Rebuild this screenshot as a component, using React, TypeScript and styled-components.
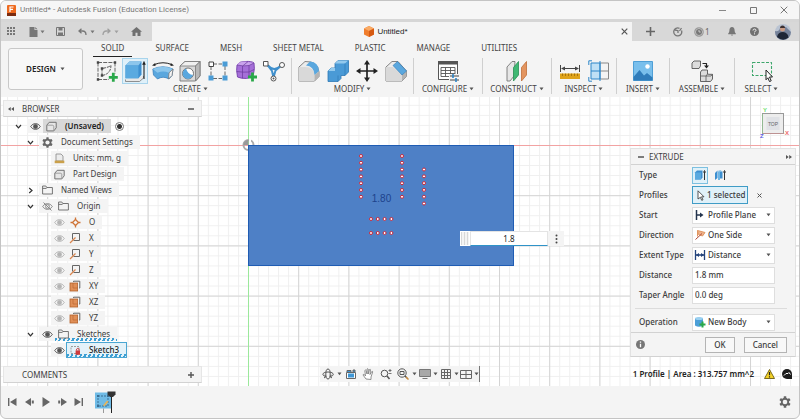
import React from 'react';
import styled, { createGlobalStyle, css } from 'styled-components';

const INK = '#3c3c3c';
const PANEL = '#f4f4f4';
const LINE = '#d2d2d2';

const GlobalStyle = createGlobalStyle`
  *, *::before, *::after { box-sizing: border-box; }
  body { margin: 0; background: #fff; }
  body, button, input, select { font-family: "Noto Sans", "Open Sans", sans-serif; font-size: 8px; line-height: 12px; color: ${INK}; }
  button { border: 0; padding: 0; background: none; cursor: pointer; }
  svg { display: block; flex: none; }
`;

/* ---------- shell ---------- */

const Window = styled.div`
  display: flex;
  flex-direction: column;
  min-height: 100vh;
  background: ${PANEL};
  border: 1px solid #c4c4c4;
  border-radius: 6px;
  overflow: hidden;
`;

const TitleBar = styled.header`
  display: flex;
  align-items: center;
  height: 18px;
  padding: 0 9px 0 6px;
  background: #f6f6f6;
`;

const Title = styled.h1`
  flex: 1;
  margin: 0 0 0 4px;
  font: 400 8px/12px Roboto, sans-serif;
  color: #777;
`;

const WindowButtons = styled.div`
  display: flex;
  gap: 19px;
`;

const IconButton = styled.button<{ $w?: number; $h?: number }>`
  display: flex;
  align-items: center;
  justify-content: center;
  flex: none;
  width: ${p => p.$w ?? 12}px;
  height: ${p => p.$h ?? 14}px;
`;

const DocumentBar = styled.div`
  display: flex;
  height: 22px;
  border-top: 3px solid #d6d6d6;
  background: #d8d8d8;
`;

const QuickAccess = styled.div`
  display: flex;
  align-items: center;
  width: 151px;
  padding-left: 4px;
`;

const Spacer = styled.span<{ $w: number }>`
  flex: none;
  width: ${p => p.$w}px;
`;

const DocumentTab = styled.div`
  flex: 1;
  display: flex;
  align-items: center;
  padding: 0 2px 0 2px;
  background: ${PANEL};
`;

const TabTitle = styled.div`
  flex: 1;
  display: flex;
  align-items: center;
  justify-content: center;
  gap: 3px;
  font: 400 8px/12px "Liberation Sans", sans-serif;
  color: #222;
`;

const AccountArea = styled.div`
  display: flex;
  align-items: center;
  width: 167px;
  padding: 0 8px 0 11px;
`;

const JobCount = styled.span`
  margin-left: 1px;
  color: #666;
`;

/* ---------- ribbon ---------- */

const Ribbon = styled.div`
  display: flex;
  height: 56px;
`;

const WorkspaceButton = styled.button`
  display: flex;
  align-items: center;
  justify-content: center;
  gap: 4px;
  flex: none;
  width: 75px;
  height: 42px;
  margin: 7px 7px 0;
  border: 1px solid #c8c8c8;
  border-radius: 3px;
  background: #f8f8f8;
  font-weight: 600;
  color: #222;
`;

const RibbonMain = styled.div`
  flex: 1;
`;

const RibbonTabs = styled.nav`
  display: flex;
  gap: 31px;
  height: 16px;
  padding-left: 11px;
`;

const RibbonTab = styled.button<{ $active?: boolean }>`
  position: relative;
  height: 16px;
  padding-bottom: 2px;
  color: #444;
  ${p => p.$active && css`
    &::after {
      content: '';
      position: absolute;
      left: -8px;
      right: -8px;
      bottom: 0;
      height: 1px;
      background: #222;
    }
  `}
`;

const Groups = styled.div`
  display: flex;
`;

const Group = styled.div<{ $w: number }>`
  flex: none;
  display: flex;
  flex-direction: column;
  align-items: center;
  width: ${p => p.$w}px;
  height: 36px;
  margin-top: 1px;
  padding: 0 4px;
  & + & { border-left: 1px solid #cfcfcf; }
`;

const GroupIcons = styled.div<{ $spread?: boolean }>`
  display: flex;
  align-items: center;
  justify-content: ${p => (p.$spread ? 'space-between' : 'center')};
  gap: ${p => (p.$spread ? 0 : 3)}px;
  width: 100%;
  height: 25px;
`;

const Tool = styled.button<{ $on?: boolean }>`
  display: flex;
  align-items: center;
  justify-content: center;
  flex: none;
  width: 26px;
  height: 26px;
  border: 1px solid ${p => (p.$on ? '#a8d4ec' : 'transparent')};
  background: ${p => (p.$on ? '#dff0f9' : 'transparent')};
`;

const GroupLabel = styled.button`
  display: flex;
  align-items: center;
  gap: 2px;
  line-height: 12px;
  white-space: nowrap;
  color: #444;
`;

/* ---------- canvas ---------- */

const Canvas = styled.main`
  position: relative;
  flex: 1;
  display: flex;
  justify-content: space-between;
  min-height: 289px;
  background: #fff;
  overflow: hidden;
`;

const Scene = styled.svg`
  position: absolute;
  inset: 0;
`;

const LeftColumn = styled.div`
  position: relative;
  display: flex;
  flex-direction: column;
  width: 201px;
  padding: 3px 0 3px 2px;
`;

const PaneHeader = styled.div`
  display: flex;
  align-items: center;
  height: 17px;
  padding: 0 4px;
  background: ${PANEL};
  border: 1px solid #e6e6e6;
  border-bottom-color: ${LINE};
`;

const PaneTitle = styled.h2<{ $inset?: boolean }>`
  flex: 1;
  margin: 0;
  padding-left: ${p => (p.$inset ? 14 : 2)}px;
  font-size: 8px;
  font-weight: 400;
  line-height: 12px;
`;

const Tree = styled.ul`
  flex: 1;
  margin: 1px 0 0;
  padding: 0;
  list-style: none;
`;

const TreeRow = styled.li<{ $level: number; $leaf?: boolean }>`
  display: flex;
  align-items: center;
  height: 16px;
  padding-left: ${p => 7 + p.$level * 12 + (p.$leaf ? 17 : 0)}px;
`;

const Cell = styled.span`
  display: flex;
  align-items: center;
  justify-content: center;
  flex: none;
  width: 16px;
  height: 14px;
`;

const Expander = styled.button`
  display: flex;
  align-items: center;
  justify-content: center;
  width: 16px;
  height: 14px;
  margin-right: 1px;
`;

const RowBody = styled.div<{ $tone?: 'root' | 'picked' | 'hatched' }>`
  display: flex;
  align-items: center;
  height: 14px;
  padding-right: 7px;
  background: ${PANEL};
  ${p => p.$tone === 'root' && css`background: #d8d8d8; font-weight: 600; color: #222;`}
  ${p => (p.$tone === 'hatched' || p.$tone === 'picked') && css`
    background: repeating-linear-gradient(115deg, #3c9fd4 0 2px, transparent 2px 4px) left bottom / 100% 3px no-repeat, ${PANEL};
  `}
  ${p => p.$tone === 'picked' && css`
    background-color: #e4f2f9;
    outline: 1px solid #4aa6d2;
    font-weight: 500;
    color: #222;
  `}
`;

const RowText = styled.span`
  padding-left: 6px;
  white-space: nowrap;
`;

const EyeBox = styled.button`
  display: flex;
  align-items: center;
  justify-content: center;
  width: 16px;
  height: 14px;
  background: ${PANEL};
`;

const ActiveRadio = styled.input`
  appearance: none;
  width: 9px;
  height: 9px;
  margin: 0 0 0 4px;
  border: 1px solid #777;
  border-radius: 50%;
  background: radial-gradient(circle, #333 0 2px, #fff 3px);
`;

const NavBar = styled.div`
  position: absolute;
  left: 40%;
  bottom: 4px;
  display: flex;
  align-items: center;
  height: 16px;
  background: ${PANEL};
  border-right: 1px solid #777;
`;

const ValueBox = styled.div`
  position: absolute;
  left: 459px;
  top: 134px;
  display: flex;
  height: 15px;
`;

const Grip = styled.span`
  width: 10px;
  border: 1px solid #fff;
  background: repeating-linear-gradient(90deg, #d8d8d8 0 1px, #f4f4f4 1px 3px);
`;

const ValueInput = styled.input`
  width: 78px;
  padding: 0;
  border: 1px solid #e4e4e4;
  border-bottom: 1px solid #2f93c8;
  background: #fff;
  text-align: center;
  color: #222;
  outline: 0;
`;

const ValueMenu = styled(IconButton)`
  height: 15px;
  background: ${PANEL};
`;

const RightColumn = styled.div`
  position: relative;
  display: flex;
  flex-direction: column;
  width: 169px;
  padding-right: 3px;
`;

const CubeArea = styled.div`
  display: flex;
  justify-content: flex-end;
  height: 51px;
  padding: 9px 6px 0 0;
`;

const Dialog = styled.form`
  background: ${PANEL};
  border: 1px solid #e2e2e2;
  border-bottom-color: ${LINE};
`;

const DialogHeader = styled.div`
  display: flex;
  align-items: center;
  height: 16px;
  padding: 0 3px 0 7px;
  border-bottom: 1px solid ${LINE};
`;

const DialogTitle = styled.h2`
  flex: 1;
  margin: 0 0 0 5px;
  font-size: 8px;
  font-weight: 400;
  line-height: 12px;
`;

const Field = styled.div`
  display: flex;
  align-items: center;
  height: 20px;
  padding-left: 8px;
`;

const fieldLabel = css`
  width: 53px;
  flex: none;
  font-weight: 500;
  white-space: nowrap;
`;
const FieldLabel = styled.label`${fieldLabel}`;
const FieldName = styled.span`${fieldLabel}`;

const SelectShell = styled.div`
  display: flex;
  align-items: center;
  width: 83px;
  height: 17px;
  padding-left: 1px;
  border: 1px solid #dedede;
  background: #fff;
`;

const Select = styled.select`
  flex: 1;
  min-width: 0;
  height: 15px;
  margin-left: 2px;
  padding: 0;
  border: 0;
  appearance: none;
  font-weight: 500;
  background: none;
  outline: 0;
`;

const SelectCaret = styled.span`
  flex: none;
  width: 8px;
  pointer-events: none;
`;

const TextInput = styled.input`
  width: 83px;
  height: 17px;
  padding: 0 2px 1px;
  border: 1px solid #dedede;
  background: #fff;
  font-weight: 500;
`;

const TypeButton = styled.button<{ $on?: boolean }>`
  display: flex;
  align-items: center;
  justify-content: center;
  width: 16px;
  height: 17px;
  margin-right: 4px;
  border: 1px solid ${p => (p.$on ? '#7cc0e0' : 'transparent')};
  background: ${p => (p.$on ? '#e0f1f9' : 'transparent')};
`;

const PickButton = styled.button`
  display: flex;
  align-items: center;
  gap: 2px;
  width: 56px;
  height: 18px;
  margin-right: 6px;
  padding-left: 4px;
  border: 1px solid #3f9cc6;
  background: #e0f1f9;
  font-weight: 500;
  white-space: nowrap;
`;

const Rule = styled.hr`
  height: 1px;
  margin: 3px 8px 3px 4px;
  border: 0;
  background: #dcdcdc;
`;

const DialogFooter = styled.div`
  display: flex;
  align-items: center;
  gap: 9px;
  height: 24px;
  padding: 0 8px 0 5px;
  border-top: 1px solid ${LINE};
`;

const DialogButton = styled.button`
  height: 16px;
  padding: 0 8px;
  border: 1px solid #b4b4b4;
  background: #f8f8f8;
  font-weight: 500;
`;

const Grow = styled.span`
  flex: 1;
`;

const StatusLine = styled.div`
  display: flex;
  align-items: center;
  justify-content: flex-end;
  gap: 7px;
  margin-top: auto;
  height: 24px;
  padding-right: 4px;
  font-weight: 600;
  color: #222;
  white-space: nowrap;
`;

const StatusIcons = styled.span`
  display: flex;
  align-items: center;
  gap: 7px;
  padding-left: 3px;
`;

const Timeline = styled.footer`
  display: flex;
  align-items: center;
  height: 32px;
  padding: 0 7px 0 3px;
`;

const Marker = styled.div`
  display: flex;
  padding-left: 7px;
`;

/* ---------- icons ---------- */

const Caret = ({ color = '#555' }: { color?: string }) => (
  <svg width="5" height="4" viewBox="0 0 5 4"><path d="M.5.5h4L2.5 3.3z" fill={color} /></svg>
);

const Chevron = ({ open }: { open: boolean }) => (
  <svg width="7" height="7" viewBox="0 0 7 7" fill="none" stroke="#333" strokeWidth="1.2">
    <path d={open ? 'M1 2l2.5 2.8L6 2' : 'M2.2 1L5 3.5 2.2 6'} />
  </svg>
);

const Gear = ({ size }: { size: number }) => (
  <svg width={size} height={size} viewBox="0 0 12 12">
    <g fill="#666">
      {[0, 60, 120].map(a => <rect key={a} x="4.7" y="0.3" width="2.6" height="11.4" rx=".5" transform={`rotate(${a} 6 6)`} />)}
      <circle cx="6" cy="6" r="4.2" />
    </g>
    <circle cx="6" cy="6" r="2.3" fill={PANEL} />
  </svg>
);

const Eye = ({ tone, off }: { tone: string; off?: boolean }) => (
  <svg width="11" height="9" viewBox="0 0 11 9" fill="none" stroke={tone}>
    <path d="M.7 4.5C3 .7 8 .7 10.3 4.5 8 8.3 3 8.3.7 4.5z" />
    <circle cx="5.5" cy="4.5" r="1.9" fill={off ? 'none' : tone} />
    {off && <path d="M1.5.5l8 8" />}
  </svg>
);

const Folder = () => (
  <svg width="11" height="10" viewBox="0 0 11 10" fill="none" stroke="#666" strokeWidth=".9">
    <path d="M.6 9V1h3.2l1 1.5h5.6V9zM.6 3.4h3.7l.8-.9" />
  </svg>
);

const BodyIcon = () => (
  <svg width="11" height="11" viewBox="0 0 11 11" fill="#e6e6e6" stroke="#666" strokeWidth=".9">
    <path d="M.8 4.2l2.4-2.9h7v5.5L7.800 9.900H.8z" />
    <path d="M.8 4.200h5.500q1.500 0 1.500 1.500v4" fill="none" stroke="#999" />
  </svg>
);

const UnitsIcon = () => (
  <svg width="11" height="11" viewBox="0 0 11 11">
    <path d="M2 1h5l2 2v5H2z" fill="#ececec" stroke="#888" strokeWidth=".8" />
    <rect x=".7" y="7.6" width="9.6" height="2.6" fill="#caa04a" />
  </svg>
);

const PointIcon = () => (
  <svg width="11" height="11" viewBox="0 0 11 11" fill="none" stroke="#cf7437" strokeWidth="1.3">
    <path d="M5.5 2.5l3 3-3 3-3-3z" /><path d="M5.5.5v2M5.5 8.5v2M.5 5.5h2M8.5 5.5h2" />
  </svg>
);

const AxisIcon = () => (
  <svg width="12" height="12" viewBox="0 0 12 12" fill="none">
    <path d="M3.5 7.5v-6h7v7h-6" stroke="#666" /><path d="M1 11l5.5-5.5" stroke="#d98650" strokeWidth="1.3" />
  </svg>
);

const PlaneIcon = () => (
  <svg width="12" height="12" viewBox="0 0 12 12">
    <path d="M4.5 2V1.2h6.3V8H10" fill="none" stroke="#666" />
    <rect x="1" y="3" width="7.6" height="8" fill="#e08f58" stroke="#b5622c" strokeWidth=".8" />
    <path d="M4 3v5h4.6" fill="none" stroke="#b5622c" strokeWidth=".6" />
  </svg>
);

const LockedSketch = () => (
  <svg width="12" height="11" viewBox="0 0 12 11">
    <path d="M2 1.5h8v7H2z" fill="none" stroke="#888" strokeWidth=".8" strokeDasharray="2 1" />
    <rect x="6.6" y="5.4" width="4.4" height="4.4" fill="#d03a3a" /><path d="M7.5 5.4V4.2q1.3-1.6 2.6 0v1.2" fill="none" stroke="#d03a3a" />
  </svg>
);

const ToolSvg = ({ children }: { children: React.ReactNode }) => (
  <svg width="22" height="22" viewBox="0 0 22 22" fill="none" strokeLinejoin="round">{children}</svg>
);

const Plus = ({ x, y }: { x: number; y: number }) => (
  <path d={`M${x} ${y - 4.5}v9M${x - 4.5} ${y}h9`} stroke="#2aa84a" strokeWidth="2.8" />
);

const icons: Record<string, React.ReactNode> = {
  sketch: <>
    <path d="M2 2.5h17M2 2.5v17M19 2.5v11M2 19.5h11" stroke="#555" strokeWidth=".9" strokeDasharray="4 1.2" />
    <path d="M6 15.5V8.5C9 8 13 7 15 5.5c0 4-2 9-9 10z" stroke="#555" strokeDasharray="3 1" />
    <path d="M.8 1.3h2.4v2.4H.8zM17.8 1.3h2.4v2.4h-2.4zM.8 18.3h2.4v2.4H.8zM4.8 7.3h2.4v2.4H4.8zM4.8 14.3h2.4v2.4H4.8z" fill="#444" />
    <Plus x={17.3} y={17.3} />
  </>,
  extrude: <>
    <path d="M1.5 19.5v2h14l4-3.5v-2" fill="#e8e8e8" stroke="#777" strokeWidth=".8" />
    <path d="M1.5 5.5l4-4h12v13l-3 3.8h-13z" fill="#3d8fd0" />
    <path d="M1.5 5.5l4-4h11.9l-3 4z" fill="#8cc6ec" /><path d="M1.5 5.5h12.9v12.8H1.5z" fill="#5aaae0" />
    <path d="M20 19V3.5" stroke="#222" strokeWidth="1.1" /><path d="M20 .8l1.8 4h-3.6z" fill="#222" />
  </>,
  revolve: <>
    <path d="M.8 9Q11 4.500 21 9l-1 6.500-3 3.500q-6-3.500-11.500 0L1.500 15z" fill="#5aa7de" stroke="#2f79b8" strokeWidth=".7" />
    <path d="M.8 9Q11 4.500 21 9l-4 3.800q-6-2.500-11.500 0z" fill="#8cc6ec" />
    <path d="M21 9l-1 6.500-3.500 3.500.5-6.200z" fill="#f3f3f3" stroke="#777" strokeWidth=".8" />
    <path d="M2.500 4.500q8.500-3.500 17 0" stroke="#222" /><path d="M0 5.500l3.200-2.500.3 3zM22 5.500l-3.200-2.500-.3 3z" fill="#222" />
  </>,
  hole: <>
    <path d="M1 6l5-4.500h15V16l-4.500 5H1z" fill="#d9d9d9" stroke="#777" strokeWidth=".9" />
    <path d="M1 6l5-4.500h15L16.500 6z" fill="#f0f0f0" stroke="#777" strokeWidth=".8" /><path d="M16.500 6v15L21 16V1.500z" fill="#b8b8b8" stroke="#777" strokeWidth=".8" />
    <circle cx="9" cy="13.500" r="5.500" fill="#fff" stroke="#666" strokeWidth=".9" /><path d="M7 8.600a5.300 5.300 0 1 0 7 6.500q-5 0-7-6.500z" fill="#5aa7de" />
  </>,
  pattern: <>
    <path d="M6 4h9M4 6v10M18 6v10M6 18.500h9" stroke="#666" strokeDasharray="4 1.500" />
    <path d="M2 2h4.500v4.500H2z" fill="#fff" stroke="#444" /><path d="M15.500 1.500h5v5h-5zM1.500 15.500h5v5h-5zM15.500 15.500h5v5h-5z" fill="#4a9cd6" />
  </>,
  form: <>
    <path d="M2 5q3-4 8-3.500 7-.5 9 1.500 1 6-.5 11-2 4-7 4.500-6 0-9-1.500Q1 10 2 5z" fill="#a56fd8" stroke="#7440ac" strokeWidth=".9" />
    <path d="M2 5q6 1.500 12 .5l5-2.500-9-1.500q-6 0-8 3.500z" fill="#c9a2ec" />
    <path d="M2 5q6 1.500 12 .5l5-2.500M14 5.500V18M7.500 6v12.300M1.800 11.500q6 1 12.200.5l5-2.500M8 5.700l5-4.100" stroke="#6a389c" strokeWidth=".7" />
    <Plus x={17.5} y={17} />
  </>,
  link: <>
    <path d="M4 4.500l5 6.500 1.500 6.500M18.500 5.500l-6 5-2 7M5 5.500q6 7 13 0" stroke="#3f8fcc" strokeWidth="2" />
    <path d="M.5 1.500H5V6H.5z" fill="#fff" stroke="#555" /><circle cx="19" cy="5" r="2.500" fill="#fff" stroke="#555" /><circle cx="10.500" cy="18.500" r="2.500" fill="#fff" stroke="#555" />
    <circle cx="10.500" cy="18.500" r="1" fill="#555" />
  </>,
  fillet: <>
    <path d="M1 7l6-5.500Q20 1 21 12v4.500L16.500 21H1z" fill="#ececec" stroke="#777" strokeWidth=".9" />
    <path d="M1 7h6q9 0 9.500 8v6H1z" fill="#d9d9d9" />
    <path d="M16.500 15v6l4.500-4.500V11z" fill="#b4b4b4" />
    <path d="M8 5.500L12 1.500Q20.500 2 21 11l-4.500 4Q16 6 8 5.500z" fill="#5aa7de" />
  </>,
  press: <>
    <path d="M1 11l3-3h4V3.500l3-3h10.500V12L18 15.500h-4v3L11 21.500H1z" fill="#4a9ad6" stroke="#2e78b5" strokeWidth=".8" />
    <path d="M8 3.500l3-3h10L18 3.500zM1 11l3-3h4v3z" fill="#94caee" /><path d="M18 3.500v12M11 15.500v6" stroke="#2e78b5" strokeWidth=".7" />
  </>,
  move: <>
    <path d="M11 3v16M3 11h16" stroke="#222" strokeWidth="1.700" />
    <path d="M11 0l3 4.500H8zM11 22l3-4.500H8zM0 11l4.500-3v6zM22 11l-4.500-3v6z" fill="#222" />
  </>,
  chamfer: <>
    <path d="M1 7l6-5.500h6L21.500 11v5.500L17 21H1z" fill="#ececec" stroke="#777" strokeWidth=".9" />
    <path d="M1 7h7l9 8v6H1z" fill="#d9d9d9" />
    <path d="M17 14.500V21l4.500-4.500V11z" fill="#b4b4b4" /><path d="M8 5.500l4.500-4 9 9.500-4.500 4z" fill="#5aa7de" stroke="#2e78b5" strokeWidth=".6" />
  </>,
  configure: <>
    <rect x="1.500" y="1.500" width="19" height="18" fill="#fff" stroke="#555" /><rect x="1" y="1" width="20" height="3.500" fill="#555" />
    <path d="M4 7.500h14v9H4zM4 10.500h14M4 13.500h14M8.500 7.500v9M13.500 7.500v9" stroke="#555" strokeWidth=".9" />
    <path d="M12 14h10v8H12z" fill={PANEL} /><path d="M13 16h9M13 20h9" stroke="#444" /><path d="M16 14v4M19 18v4" stroke="#2d86c9" strokeWidth="1.600" />
  </>,
  construct: <>
    <path d="M1 7l5-5.500h3L8 16l-4 5H1z" fill="#e6e6e6" stroke="#777" strokeWidth=".9" />
    <path d="M7.500 7.500l5-6V15l-5 6z" fill="#3fb873" stroke="#2a8f55" strokeWidth=".8" /><path d="M15.500 7.500l5-6V15l-5 6z" fill="#e39560" stroke="#c06f38" strokeWidth=".8" />
  </>,
  measure: <>
    <path d="M1.500 5v7M20.500 5v7M3 8.500h16" stroke="#444" /><path d="M2 8.500l4-2v4zM20 8.500l-4-2v4z" fill="#444" />
    <rect x="1" y="13.500" width="20" height="5.500" fill="#dfa31b" /><path d="M3.500 13.500v2.500M6.500 13.500v2.500M9.500 13.500v2.500M12.500 13.500v2.500M15.500 13.500v2.500M18.500 13.500v2.500" stroke="#99690a" strokeWidth=".8" />
  </>,
  interference: <>
    <path d="M12 3h8.500v16H12M12 11h8.500" stroke="#888" /><path d="M3 3h9v16H3z" fill="#bfe0f5" stroke="#2d86c9" />
    <path d="M3 11h9" stroke="#2d86c9" /><path d="M4 .8H.8V5M12 1v20M.8 17v4.200H4" stroke="#2d86c9" />
  </>,
  insert: <>
    <path d="M1.500 1.500h19v19h-19z" fill="#79bfec" stroke="#4f9fd6" /><circle cx="15.500" cy="6.500" r="2.200" fill="#fff" />
    <path d="M1.500 17l6-7 4.500 5.500 3-2.500 5.500 4.500v3h-19z" fill="#2f7cba" />
  </>,
  assemble: <>
    <path d="M1 3l2-2h6.500v5L8 8.500H1z" fill="#dcdcdc" stroke="#555" strokeWidth=".9" />
    <path d="M9.500 12l1.500-2h5.500v4l1.500.3h3.500V19l-2 2.500h-10z" fill="#dcdcdc" stroke="#555" strokeWidth=".9" />
    <path d="M9.500 16H15l1.500-2M15 16v5.500M15 16h5l1.500-1.700" stroke="#555" strokeWidth=".8" /><path d="M11.500 3.500h4V6" stroke="#222" strokeWidth="1.200" /><path d="M13 5.500h5L15.500 8.500z" fill="#222" />
  </>,
  select: <>
    <path d="M1.500 2.500h19v13h-19z" stroke="#3da66b" strokeWidth="1.100" strokeDasharray="3 1.500" />
    <path d="M15 10l6.500 7h-3l1.700 3.800-1.700.8-1.600-3.800-1.900 2z" fill="#fff" stroke="#222" />
  </>,
};

const toolName: Record<string, string> = {
  sketch: 'Create Sketch', extrude: 'Extrude', revolve: 'Revolve', hole: 'Hole', pattern: 'Rectangular Pattern',
  form: 'Create Form', link: 'Derive', fillet: 'Fillet', press: 'Press Pull', move: 'Move', chamfer: 'Chamfer',
  configure: 'Configure', construct: 'Offset Plane', measure: 'Measure', interference: 'Interference',
  insert: 'Insert Canvas', assemble: 'Joint', select: 'Select',
};

const groups: { label: string; w: number; tools: string[] }[] = [
  { label: 'CREATE', w: 201, tools: ['sketch', 'extrude', 'revolve', 'hole', 'pattern', 'form', 'link'] },
  { label: 'MODIFY', w: 122, tools: ['fillet', 'press', 'move', 'chamfer'] },
  { label: 'CONFIGURE', w: 69, tools: ['configure'] },
  { label: 'CONSTRUCT', w: 69, tools: ['construct'] },
  { label: 'INSPECT', w: 65, tools: ['measure', 'interference'] },
  { label: 'INSERT', w: 53, tools: ['insert'] },
  { label: 'ASSEMBLE', w: 65, tools: ['assemble'] },
  { label: 'SELECT', w: 54, tools: ['select'] },
];

const NavSvg = ({ children }: { children: React.ReactNode }) => (
  <svg width="12" height="12" viewBox="0 0 12 12" fill="none" stroke="#555" strokeWidth="1">{children}</svg>
);

/* ---------- scene ---------- */

const range = (n: number) => Array.from({ length: n }, (_, i) => i);
const holes: [number, number][] = [
  ...range(7).flatMap((i): [number, number][] => [[360, 59 + i * 6.8], [401, 59 + i * 6.8]]),
  ...range(6).map((i): [number, number] => [423, 72.5 + i * 6.8]),
  ...range(4).flatMap((i): [number, number][] => [[370 + i * 6.8, 122], [370 + i * 6.8, 136]]),
];

const Model = () => (
  <Scene width="100%" height="100%" aria-label="Sketch profile">
    <defs>
      <pattern id="minor" width="10.04" height="10.04" patternUnits="userSpaceOnUse" x="46.2" y="48">
        <path d="M.5 0v10.04M0 .5h10.04" stroke="#efefef" fill="none" />
      </pattern>
      <pattern id="major" width="50.2" height="50.2" patternUnits="userSpaceOnUse" x="46.2" y="48">
        <path d="M.5 0v50.2M0 .5h50.2" stroke="#d4d4d4" fill="none" />
      </pattern>
    </defs>
    <rect width="100%" height="100%" fill="url(#minor)" />
    <rect width="100%" height="100%" fill="url(#major)" />
    <path d="M0 48.5h4000" stroke="#f2a3a3" />
    <path d="M247.5 0v2000" stroke="#9be89b" />
    <circle cx="247.5" cy="48" r="5" fill="none" stroke="#aaa" strokeWidth="2" />
    <path d="M247.5 48h-5a5 5 0 0 1 5-5z" fill="#999" />
    <path d="M248 42h2v6h-2z" fill="#fff" />
    <rect x="247.5" y="48.5" width="265" height="120" fill="#4e80c6" stroke="#1f5cb3" />
    {holes.map(([x, y]) => <circle key={`${x}-${y}`} cx={x} cy={y} r="1.5" fill="#fff" stroke="#c8283c" />)}
    <text x="380.5" y="104.5" textAnchor="middle" fontFamily="Liberation Sans, sans-serif" fontSize="10" fill="#1d438c">1.80</text>
  </Scene>
);

/* ---------- browser tree ---------- */

type Node = {
  text: string; level: number; expander?: 'open' | 'closed'; eye?: 'on' | 'dim' | 'off';
  icon: React.ReactNode; tone?: 'root' | 'picked' | 'hatched';
};

const nodes: Node[] = [
  { text: '(Unsaved)', level: 0, expander: 'open', eye: 'on', icon: <BodyIcon />, tone: 'root' },
  { text: 'Document Settings', level: 1, expander: 'open', icon: <Gear size={11} /> },
  { text: 'Units: mm, g', level: 2, icon: <UnitsIcon /> },
  { text: 'Part Design', level: 2, icon: <BodyIcon /> },
  { text: 'Named Views', level: 1, expander: 'closed', icon: <Folder /> },
  { text: 'Origin', level: 1, expander: 'open', eye: 'off', icon: <Folder /> },
  { text: 'O', level: 2, eye: 'dim', icon: <PointIcon /> },
  ...['X', 'Y', 'Z'].map((text): Node => ({ text, level: 2, eye: 'dim', icon: <AxisIcon /> })),
  ...['XY', 'XZ', 'YZ'].map((text): Node => ({ text, level: 2, eye: 'dim', icon: <PlaneIcon /> })),
  { text: 'Sketches', level: 1, expander: 'open', eye: 'on', icon: <Folder />, tone: 'hatched' },
  { text: 'Sketch3', level: 2, eye: 'on', icon: <LockedSketch />, tone: 'picked' },
];

const BrowserRow = ({ n }: { n: Node }) => (
  <TreeRow $level={n.level} $leaf={!n.expander}>
    {n.expander && <Expander aria-label={`Toggle ${n.text}`}><Chevron open={n.expander === 'open'} /></Expander>}
    {n.eye && <EyeBox aria-label={`Visibility of ${n.text}`}><Eye tone={n.eye === 'dim' ? '#b4b4b4' : n.eye === 'off' ? '#888' : '#555'} off={n.eye === 'off'} /></EyeBox>}
    <RowBody $tone={n.tone}><Cell>{n.icon}</Cell><RowText>{n.text}</RowText></RowBody>
    {n.tone === 'root' && <ActiveRadio type="radio" name="active" defaultChecked aria-label="Activate (Unsaved)" />}
  </TreeRow>
);

/* ---------- dialog ---------- */

const startIcon = <NavSvg><path d="M2.5 1v10M3 6h4" stroke="#24344e" strokeWidth="1.5" /><path d="M6 3.5L9.5 6 6 8.5z" fill="#24344e" stroke="none" /></NavSvg>;
const sideIcon = <NavSvg><path d="M3.500 1.500l7.500 2-2.500 3.500-4-1.500z" fill="#f0b48c" stroke="#e09560" /><path d="M1.500 10.500L8 4.500" stroke="#b04a3a" /><path d="M3.500 1.500v6" stroke="#e09560" /></NavSvg>;
const distIcon = <NavSvg><path d="M1.5 1v10M10.5 1v10M2 6h8" stroke="#24447c" strokeWidth="1.3" /><path d="M2 6l3-2v4zM10 6L7 4v4z" fill="#24447c" stroke="none" /></NavSvg>;
const bodyIcon = (
  <svg width="12" height="12" viewBox="0 0 12 12">
    <path d="M1 2.5q4-2 8 0v7q-4 2.500-8 0z" fill="#4c9fd8" /><ellipse cx="5" cy="2.5" rx="4" ry="1.5" fill="#9bd0f0" />
    <path d="M8.5 5.5v6M5.5 8.5h6" stroke="#2aa84a" strokeWidth="2" />
  </svg>
);

const DropField = ({ label, value, icon }: { label: string; value: string; icon: React.ReactNode }) => {
  const id = label.toLowerCase().replace(' ', '-');
  return (
    <Field>
      <FieldLabel htmlFor={id}>{label}</FieldLabel>
      <SelectShell>{icon}<Select id={id} defaultValue={value}><option>{value}</option></Select><SelectCaret><Caret /></SelectCaret></SelectShell>
    </Field>
  );
};

const ExtrudeDialog = () => (
  <Dialog onSubmit={e => e.preventDefault()}>
    <DialogHeader>
      <svg width="6" height="6"><path d="M0 3h6" stroke="#555" strokeWidth="1.4" /></svg>
      <DialogTitle>EXTRUDE</DialogTitle>
      <svg width="6" height="6" viewBox="0 0 6 6" fill="#555"><path d="M0 1l2.7 2L0 5zM3.2 1L6 3 3.2 5z" /></svg>
    </DialogHeader>
    <Field>
      <FieldName>Type</FieldName>
      <TypeButton type="button" $on aria-label="Extrude">
        <svg width="12" height="12" viewBox="0 0 12 12"><path d="M1 3.5L3 1.5h5.5v7L7 10.5H1z" fill="#3d8fd0" /><path d="M1 3.5h6v7H1z" fill="#5aaae0" /><path d="M10.5 11V2.5M9.5 3.5l1-2 1 2" stroke="#333" fill="none" /></svg>
      </TypeButton>
      <TypeButton type="button" aria-label="Thin Extrude">
        <svg width="12" height="12" viewBox="0 0 12 12"><path d="M1 4l2.5-2.500V9L1 11zM4.500 2.500H8.500v7h-4z" fill="#3d8fd0" /><path d="M3.500 2l3-.8 2 1.300H4zM4 3h2v8H4z" fill="#6db6e6" /><path d="M10.500 11V2.500M9.500 3.500l1-2 1 2" stroke="#333" fill="none" /></svg>
      </TypeButton>
    </Field>
    <Field>
      <FieldName>Profiles</FieldName>
      <PickButton type="button">
        <svg width="8" height="11" viewBox="0 0 8 11"><path d="M1 .8l6 6H4.5L6 9.8l-1.3.5-1.3-3L1 9z" fill="#fff" stroke="#444" strokeWidth=".9" /></svg>
        1 selected
      </PickButton>
      <IconButton type="button" $w={10} aria-label="Clear profiles"><svg width="5" height="5" stroke="#555"><path d="M.5.5l4 4M4.5.5l-4 4" /></svg></IconButton>
    </Field>
    <DropField label="Start" value="Profile Plane" icon={startIcon} />
    <DropField label="Direction" value="One Side" icon={sideIcon} />
    <DropField label="Extent Type" value="Distance" icon={distIcon} />
    <Field><FieldLabel htmlFor="distance">Distance</FieldLabel><TextInput id="distance" defaultValue="1.8 mm" /></Field>
    <Field><FieldLabel htmlFor="taper">Taper Angle</FieldLabel><TextInput id="taper" defaultValue="0.0 deg" /></Field>
    <Rule />
    <DropField label="Operation" value="New Body" icon={bodyIcon} />
    <DialogFooter>
      <svg width="9" height="9" viewBox="0 0 9 9"><circle cx="4.5" cy="4.5" r="4.5" fill="#777" /><path d="M4.5 1.5v1.3M4.5 3.8v3.5" stroke="#fff" strokeWidth="1.3" /></svg>
      <Grow />
      <DialogButton type="submit">OK</DialogButton>
      <DialogButton type="button">Cancel</DialogButton>
    </DialogFooter>
  </Dialog>
);

/* ---------- app ---------- */

export default function App() {
  return (
    <>
      <GlobalStyle />
      <Window>
        <TitleBar>
          <svg width="9" height="11" viewBox="0 0 9 11">
            <rect width="9" height="11" rx="1" fill="#ee6a1f" /><rect y="8" width="9" height="3" fill="#7c2c10" />
            <path d="M3 7V2h3.5M3 4.3h3" stroke="#fff" strokeWidth="1.2" fill="none" />
          </svg>
          <Title>Untitled* - Autodesk Fusion (Education License)</Title>
          <WindowButtons>
            <IconButton aria-label="Minimize"><svg width="7" height="7" stroke="#888"><path d="M0 3.5h7" /></svg></IconButton>
            <IconButton aria-label="Maximize"><svg width="7" height="7" stroke="#777" fill="none"><path d="M.5.5h6v6h-6z" /></svg></IconButton>
            <IconButton aria-label="Close"><svg width="8" height="8" stroke="#777"><path d="M.7.7l6.6 6.6M7.3.7L.7 7.3" /></svg></IconButton>
          </WindowButtons>
        </TitleBar>

        <DocumentBar>
          <QuickAccess>
            <IconButton aria-label="Data panel">
              <svg width="9" height="9" fill="#777">{range(9).map(i => <rect key={i} x={(i % 3) * 3} y={Math.floor(i / 3) * 3} width="2" height="2" />)}</svg>
            </IconButton>
            <Spacer $w={10} />
            <IconButton aria-label="File"><svg width="9" height="10" viewBox="0 0 9 10" fill="#777"><path d="M.5 0h5v3h3v7h-8zM6.3 0l2.2 2.2H6.3z" /></svg></IconButton>
            <IconButton $w={7} aria-label="File menu"><Caret color="#777" /></IconButton>
            <Spacer $w={8} />
            <IconButton aria-label="Save"><svg width="9" height="9" viewBox="0 0 9 9"><path d="M.5.5h8v8h-8z" fill="none" stroke="#777" /><path d="M2.5 0h4v3.5h-4zM2 5.5h5V9H2z" fill="#777" /></svg></IconButton>
            <Spacer $w={10} />
            <IconButton aria-label="Undo"><svg width="9" height="8" viewBox="0 0 9 8" fill="none" stroke="#777" strokeWidth="1.3"><path d="M3.5.8L1 3l2.5 2.2M1 3h3.5Q8 3 8 7" /></svg></IconButton>
            <IconButton $w={8} aria-label="Undo history"><Caret color="#777" /></IconButton>
            <Spacer $w={4} />
            <IconButton aria-label="Redo"><svg width="9" height="8" viewBox="0 0 9 8" fill="none" stroke="#a0a0a0" strokeWidth="1.3"><path d="M5.5.8L8 3 5.5 5.2M8 3H4.5Q1 3 1 7" /></svg></IconButton>
            <IconButton $w={8} aria-label="Redo history"><Caret color="#a0a0a0" /></IconButton>
            <Spacer $w={10} />
            <IconButton aria-label="Home"><svg width="11" height="9" viewBox="0 0 11 9" fill="#707070"><path d="M5.5 0L11 4.7H9.5V9h-3V5.7h-2V9h-3V4.7H0z" /></svg></IconButton>
          </QuickAccess>
          <DocumentTab>
            <TabTitle>
              <svg width="10" height="11" viewBox="0 0 10 11"><path d="M0 2.5L5 0l5 2.5v6L5 11 0 8.5z" fill="#f07d2c" /><path d="M0 2.5L5 0l5 2.5L5 5z" fill="#f9ab66" /><path d="M5 5l5-2.5v6L5 11z" fill="#d65a12" /></svg>
              Untitled*
            </TabTitle>
            <IconButton aria-label="Close tab"><svg width="7" height="7" stroke="#555" strokeWidth="1.2"><path d="M.7.7l5.6 5.6M6.3.7L.7 6.3" /></svg></IconButton>
          </DocumentTab>
          <AccountArea>
            <IconButton $w={14} aria-label="New design"><svg width="9" height="9" stroke="#666" strokeWidth="1.6"><path d="M4.5 0v9M0 4.5h9" /></svg></IconButton>
            <Spacer $w={15} />
            <IconButton aria-label="Extensions"><svg width="10" height="10" viewBox="0 0 10 10" fill="none" stroke="#777" strokeWidth="1.3"><path d="M6.5 1.3a4 4 0 1 0 2 2.2" /><path d="M2 3l3 .7V6M6.5 4l2-3" /></svg></IconButton>
            <Spacer $w={10} />
            <IconButton $w={10} aria-label="Job status"><svg width="10" height="10" viewBox="0 0 10 10"><circle cx="5" cy="5" r="4.2" fill="none" stroke="#999" strokeWidth="1.2" /><circle cx="5" cy="5" r="3" fill="#777" /><path d="M5 3v2h1.7" stroke="#ddd" fill="none" strokeWidth=".8" /></svg></IconButton>
            <JobCount>1</JobCount>
            <Grow />
            <IconButton aria-label="Notifications"><svg width="8" height="9" viewBox="0 0 8 9" fill="#777"><path d="M4 0q2.6.4 2.6 3.5 0 2 1.2 3v.7H.2v-.7q1.2-1 1.2-3Q1.4.4 4 0zM3 7.8h2L4 9z" /></svg></IconButton>
            <Spacer $w={10} />
            <IconButton aria-label="Help"><svg width="9" height="9" viewBox="0 0 9 9"><circle cx="4.5" cy="4.5" r="4.5" fill="#707070" /><path d="M3 3.5q0-1.5 1.5-1.5T6 3.4Q6 4.2 4.5 4.8v.5M4.5 6.3v1.1" stroke="#eee" fill="none" strokeWidth="1" /></svg></IconButton>
            <Spacer $w={15} />
            <IconButton $w={16} $h={16} aria-label="Account">
              <svg width="16" height="16" viewBox="0 0 16 16">
                <circle cx="8" cy="8" r="8" fill="#b9c3d2" /><path d="M0 7q4 1 5-3l6-1 5 5a8 8 0 0 1-16 0z" fill="#75829a" />
                <path d="M2 13q1-5 6-5 5 .5 5.500 5.500Q8 18 2 13z" fill="#1e2636" /><circle cx="7.5" cy="5" r="2.5" fill="#c99c86" /><path d="M5 4q0-2.5 2.5-2.5T10 4z" fill="#3c3032" />
              </svg>
            </IconButton>
          </AccountArea>
        </DocumentBar>

        <Ribbon>
          <WorkspaceButton>DESIGN <Caret /></WorkspaceButton>
          <RibbonMain>
            <RibbonTabs>
              {['SOLID', 'SURFACE', 'MESH', 'SHEET METAL', 'PLASTIC', 'MANAGE', 'UTILITIES'].map(t => <RibbonTab key={t} $active={t === 'SOLID'}>{t}</RibbonTab>)}
            </RibbonTabs>
            <Groups>
              {groups.map(g => (
                <Group key={g.label} $w={g.w}>
                  <GroupIcons $spread={g.tools.length > 2}>
                    {g.tools.map(t => <Tool key={t} $on={t === 'extrude'} aria-label={toolName[t]}><ToolSvg>{icons[t]}</ToolSvg></Tool>)}
                  </GroupIcons>
                  <GroupLabel>{g.label} <Caret /></GroupLabel>
                </Group>
              ))}
            </Groups>
          </RibbonMain>
        </Ribbon>

        <Canvas>
          <Model />
          <LeftColumn>
            <PaneHeader>
              <svg width="6" height="6" viewBox="0 0 6 6" fill="#555"><path d="M2.7 1L0 3l2.7 2zM6 1L3.2 3 6 5z" /></svg>
              <Spacer $w={6} />
              <PaneTitle>BROWSER</PaneTitle>
              <IconButton aria-label="Collapse browser"><svg width="6" height="6"><path d="M0 3h6" stroke="#555" strokeWidth="1.4" /></svg></IconButton>
            </PaneHeader>
            <Tree>{nodes.map(n => <BrowserRow key={n.text} n={n} />)}</Tree>
            <PaneHeader>
              <PaneTitle $inset>COMMENTS</PaneTitle>
              <IconButton aria-label="Add comment"><svg width="6" height="6" stroke="#555" strokeWidth="1.4"><path d="M3 0v6M0 3h6" /></svg></IconButton>
            </PaneHeader>
          </LeftColumn>

          <ValueBox>
            <Grip />
            <ValueInput aria-label="Extrude distance" defaultValue="1.8" />
            <ValueMenu $w={16} aria-label="More options"><svg width="3" height="10" fill="#444"><circle cx="1.5" cy="1.5" r="1" /><circle cx="1.5" cy="5" r="1" /><circle cx="1.5" cy="8.5" r="1" /></svg></ValueMenu>
          </ValueBox>

          <NavBar>
            <IconButton $w={16} aria-label="Orbit"><NavSvg><ellipse cx="6" cy="6" rx="2.2" ry="5" /><path d="M8.500 8.500C13 7.500 12 4 6 4S-.5 7.500 3.500 8.500M2.500 6.800l1.500 1.700-2 1.500M9.500 6.800L8 8.500l2 1.500" /></NavSvg></IconButton>
            <IconButton $w={7} aria-label="Orbit menu"><Caret /></IconButton>
            <IconButton $w={16} aria-label="Look at"><NavSvg><path d="M1.500 4.500h9v6h-9z" fill="#fff" stroke="#666" /><path d="M3 5.500h6v4H3z" fill="#3f97d6" stroke="none" /><path d="M2 4V2.500h4V4M8 4V2h2v2" fill="#3f97d6" stroke="#666" /></NavSvg></IconButton>
            <IconButton $w={18} aria-label="Pan"><NavSvg><path d="M4 11L1 7q0-1 1.300-.5L3.500 8 2.800 2.500q.7-1 1.200 0L5 6V1q.7-1 1.200 0v5L7.500 1.500q.7-.8 1 .2L8 6.500l1.800-3q1-.5.9.5L9 9v2.500z" stroke="#777" strokeWidth=".8" fill="#fff" /></NavSvg></IconButton>
            <IconButton $w={17} aria-label="Zoom"><NavSvg><circle cx="4.500" cy="5.500" r="3.300" /><path d="M7 8l2.500 3" strokeWidth="1.500" /><path d="M8.500 2.500h3M10 1v3M8.500 5.500h3" strokeWidth=".8" /></NavSvg></IconButton>
            <IconButton $w={18} aria-label="Fit"><NavSvg><circle cx="5" cy="5" r="4.200" /><path d="M3 3.500h4v3H3z" /><path d="M8 8l2 2" strokeWidth="1.500" /><path d="M9 9l2.500 2.500" stroke="#c98a3a" strokeWidth="1.500" /></NavSvg></IconButton>
            <IconButton $w={5} aria-label="Fit menu"><Caret /></IconButton>
            <IconButton $w={16} aria-label="Display settings"><NavSvg><path d="M.5 1.500h11v7H.5z" fill="#a8a8a8" stroke="#777" /><path d="M3.500 10.500h5" stroke="#777" /></NavSvg></IconButton>
            <IconButton $w={5} aria-label="Display menu"><Caret /></IconButton>
            <IconButton $w={15} aria-label="Grid and snaps"><NavSvg><path d="M1.500 1.500h9v9h-9zM4.500 1.500v9M7.500 1.500v9M1.500 4.500h9M1.500 7.500h9" stroke="#666" /></NavSvg></IconButton>
            <IconButton $w={6} aria-label="Grid menu"><Caret /></IconButton>
            <IconButton $w={14} aria-label="Viewports"><NavSvg><path d="M.5 2.500h11v8H.5zM6 2.500v8M.5 6.500h11" stroke="#666" /></NavSvg></IconButton>
            <IconButton $w={6} aria-label="Viewports menu"><Caret /></IconButton>
          </NavBar>

          <RightColumn>
            <CubeArea>
              <svg width="32" height="34" viewBox="0 0 32 34" fontFamily="Liberation Sans, sans-serif" fontSize="5">
                <rect x="4.5" y="7.5" width="21" height="20" fill="#ededed" stroke="#999" />
                <rect x="8.5" y="11" width="13" height="13" fill="#e0e2e6" />
                <text x="15" y="19.5" textAnchor="middle" fill="#666">TOP</text>
                <path d="M4.5 8v20" stroke="#8ad88a" strokeWidth=".5" /><path d="M4.5 27.5h22" stroke="#e08a8a" strokeWidth=".5" />
                <g fontSize="6" fontWeight="700"><text x="5" y="6" fill="#6fe06f">Y</text><text x="27" y="29" fill="#ee6a6a">X</text><text x="2" y="32" fill="#5a5ae0">Z</text></g>
              </svg>
            </CubeArea>
            <ExtrudeDialog />
            <StatusLine>
              1 Profile | Area : 313.757 mm^2
              <StatusIcons>
                <svg width="11" height="10" viewBox="0 0 11 10"><path d="M5.5.5l5 9H.5z" fill="#f5d327" stroke="#6b5b10" strokeWidth=".9" strokeLinejoin="round" /><path d="M5.5 3v3.3M5.5 7.3v1.2" stroke="#222" strokeWidth="1.2" /></svg>
                <svg width="10" height="10" viewBox="0 0 10 10"><path d="M5 0a5 5 0 0 1 5 5v5H5A5 5 0 0 1 5 0z" fill="#1c1c1c" /><path d="M2 6.5l2-2h2l1-1 1.5 2" stroke="#fff" fill="none" /></svg>
              </StatusIcons>
            </StatusLine>
          </RightColumn>
        </Canvas>

        <Timeline>
          <IconButton $w={17} aria-label="Go to start"><svg width="9" height="8" viewBox="0 0 9 8" fill="#666"><path d="M0 0h1.4v8H0zM8.5 0v8L2 4z" /></svg></IconButton>
          <IconButton $w={17} aria-label="Step back"><svg width="9" height="8" viewBox="0 0 9 8" fill="#666"><path d="M6 0v8L0 4zM6.8 2.5h2v3h-2z" /></svg></IconButton>
          <IconButton $w={16} aria-label="Play"><svg width="8" height="10" viewBox="0 0 8 10" fill="#666"><path d="M.5 0L8 5 .5 10z" /></svg></IconButton>
          <IconButton $w={16} aria-label="Step forward"><svg width="9" height="8" viewBox="0 0 9 8" fill="#666"><path d="M3 0v8l6-4zM.2 2.5h2v3h-2z" /></svg></IconButton>
          <IconButton $w={17} aria-label="Go to end"><svg width="9" height="8" viewBox="0 0 9 8" fill="#666"><path d="M7.6 0H9v8H7.6zM.5 0v8L7 4z" /></svg></IconButton>
          <Marker>
            <svg width="22" height="22" viewBox="0 0 22 22">
              <rect x="1" y="1.5" width="16" height="16" fill="#6fbbe6" />
              <path d="M4 5h10v10H4z" fill="none" stroke="#3b6e92" strokeDasharray="2 1" />
              <path d="M3 4h2v2H3zM13 4h2v2h-2zM3 14h2v2H3z" fill="#3b6e92" /><path d="M9 14.500l4-5 1.500 1.200-4 4.500z" fill="#e5b45b" />
              <path d="M9.500 17.500V22" stroke="#999" /><path d="M17.500 4v18" stroke="#222" />
              <path d="M13.500.5h8v3l-2.500 2.500h-3l-2.500-2.500z" fill="#333" />
            </svg>
          </Marker>
          <Grow />
          <IconButton $w={14} aria-label="Timeline settings"><Gear size={12} /></IconButton>
        </Timeline>
      </Window>
    </>
  );
}
